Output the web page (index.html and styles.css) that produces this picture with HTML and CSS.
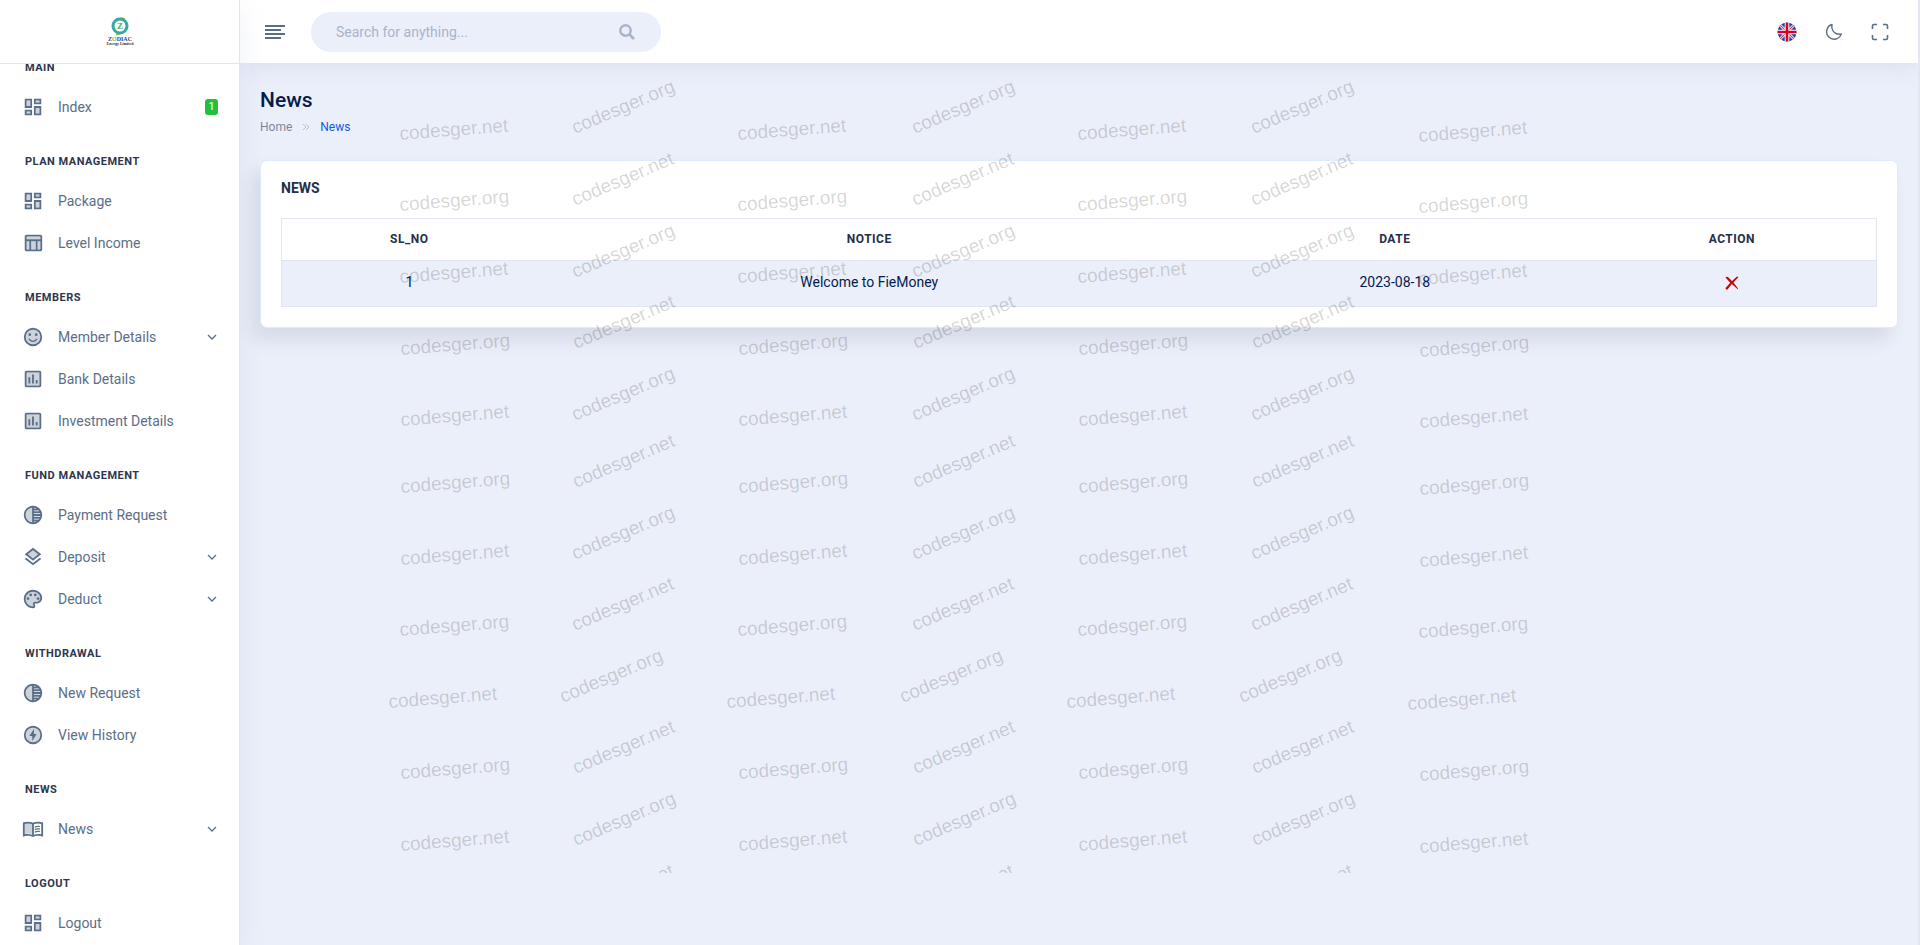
FILE: index.html
```
<!DOCTYPE html>
<html lang="en">
<head>
<meta charset="utf-8">
<title>News</title>
<link rel="stylesheet" href="styles.css">
</head>
<body>
<svg class="sprite" aria-hidden="true">
  <symbol id="i-dashboard" viewBox="0 0 24 24"><path opacity=".3" d="M5 5h4v6H5zm10 8h4v6h-4zM5 17h4v2H5zM15 5h4v2h-4z"/><path d="M3 13h8V3H3v10zm2-8h4v6H5V5zm8 16h8V11h-8v10zm2-8h4v6h-4v-6zM13 3v6h8V3h-8zm6 4h-4V5h4v2zM3 21h8v-6H3v6zm2-4h4v2H5v-2z"/></symbol>
  <symbol id="i-table" viewBox="0 0 24 24"><path opacity=".3" d="M5 10h3v9H5zm5 0h5v9h-5zm7 0h3v9h-3zM5 5h15v3H5z"/><path d="M20 3H5c-1.100 0-2 .9-2 2v14c0 1.100.9 2 2 2h15c1.100 0 2-.9 2-2V5c0-1.100-.9-2-2-2zm0 2v3H5V5h15zm-5 14h-5v-9h5v9zM5 10h3v9H5v-9zm12 9v-9h3v9h-3z"/></symbol>
  <symbol id="i-smile" viewBox="0 0 24 24"><circle cx="12" cy="12" r="8" opacity=".3"/><circle cx="15.500" cy="9.500" r="1.500"/><circle cx="8.500" cy="9.500" r="1.500"/><path d="M12 16c-1.480 0-2.750-.81-3.450-2H6.880c.8 2.050 2.790 3.500 5.120 3.500s4.320-1.450 5.120-3.500h-1.670c-.69 1.190-1.970 2-3.450 2z"/><path fill-rule="evenodd" d="M12 2a10 10 0 1 0 0 20 10 10 0 0 0 0-20zm0 2a8 8 0 1 1 0 16 8 8 0 0 1 0-16z"/></symbol>
  <symbol id="i-chart" viewBox="0 0 24 24"><path opacity=".3" d="M5 5h14v14H5z"/><path d="M19 3H5c-1.100 0-2 .9-2 2v14c0 1.100.9 2 2 2h14c1.100 0 2-.9 2-2V5c0-1.100-.9-2-2-2zm0 16H5V5h14v14zM7 10h2v7H7zm4-3h2v10h-2zm4 6h2v4h-2z"/></symbol>
  <symbol id="i-tone" viewBox="0 0 24 24"><path opacity=".3" d="M4 12a8 8 0 0 0 7 7.930V4.070A8 8 0 0 0 4 12z"/><path d="M12 2C6.480 2 2 6.480 2 12s4.480 10 10 10 10-4.480 10-10S17.520 2 12 2zm-1 17.930C7.060 19.440 4 16.080 4 12s3.050-7.440 7-7.930v15.860zm2-15.860c1.030.13 2 .45 2.870.93H13v-.93zM13 7h5.240c.25.31.48.65.68 1H13V7zm0 3h6.740c.08.33.15.66.19 1H13v-1zm0 9.930V19h2.870c-.87.48-1.840.8-2.870.93zM18.240 17H13v-1h5.920c-.2.35-.43.69-.68 1zm1.500-3H13v-1h6.930c-.04.34-.11.67-.19 1z"/></symbol>
  <symbol id="i-layers" viewBox="0 0 24 24"><path opacity=".3" d="M12 4.500 5.700 9l6.300 5 6.300-5z"/><path d="m12 18.500-7.400-5.700L3 14.100l9 7 9-7-1.600-1.300L12 18.500zM12 16l9-7-9-7-9 7 9 7zm0-11.500L17.700 9 12 13.500 6.300 9 12 4.500z"/></symbol>
  <symbol id="i-palette" viewBox="0 0 24 24"><path opacity=".3" d="M12 4a8 8 0 0 0 0 16c.3 0 .5-.2.5-.5 0-.6-.7-.9-.7-2 0-1.400 1.100-2.500 2.500-2.500H16a4 4 0 0 0 4-4c0-3.900-3.600-7-8-7z"/><path d="M12 22C6.490 22 2 17.510 2 12S6.490 2 12 2s10 4.040 10 9c0 3.310-2.690 6-6 6h-1.770c-.28 0-.5.22-.5.5 0 .12.050.23.130.33.41.47.64 1.060.64 1.670A2.500 2.500 0 0 1 12 22zm0-18c-4.410 0-8 3.590-8 8s3.590 8 8 8c.28 0 .5-.22.5-.5a.54.54 0 0 0-.14-.35c-.41-.46-.63-1.050-.63-1.650a2.500 2.500 0 0 1 2.500-2.500H16c2.210 0 4-1.790 4-4 0-3.860-3.590-7-8-7z"/><circle cx="6.500" cy="11.500" r="1.500"/><circle cx="9.500" cy="7.500" r="1.500"/><circle cx="14.500" cy="7.500" r="1.500"/><circle cx="17.500" cy="11.500" r="1.500"/></symbol>
  <symbol id="i-bolt" viewBox="0 0 24 24"><circle cx="12" cy="12" r="8" opacity=".3"/><path fill-rule="evenodd" d="M12 2a10 10 0 1 0 0 20 10 10 0 0 0 0-20zm0 2a8 8 0 1 1 0 16 8 8 0 0 1 0-16z"/><path d="M13 5.500 8 13h3.200v5.500L16 11h-3z"/></symbol>
  <symbol id="i-book" viewBox="0 0 24 24"><path opacity=".3" d="M3 6.500c2.500-.9 5.500-.9 8 0v11.200c-2.500-.9-5.500-.9-8 0z"/><path fill-rule="evenodd" d="M12 5.200C9 3.600 4.500 3.600 1 5v15.500c3.500-1.500 8-1.300 11 .3 3-1.600 7.500-1.800 11-.3V5c-3.500-1.400-8-1.400-11 .2zM3 6.500c2.500-.8 5.500-.8 8 .3v11.400c-2.500-.9-5.500-1-8-.4zm18 11.300c-2.500-.6-5.500-.5-8 .4V6.800c2.500-1.100 5.500-1.100 8-.3z"/><path d="M14 9.100c1.700-.7 3.700-.8 5.500-.5V10c-1.800-.3-3.800-.2-5.500.6zm0 2.700c1.700-.7 3.700-.8 5.500-.5v1.500c-1.800-.3-3.800-.2-5.500.5zm0 2.700c1.700-.7 3.700-.8 5.500-.5v1.500c-1.800-.3-3.800-.2-5.500.5z"/></symbol>
  <symbol id="i-down" viewBox="0 0 12 12"><path d="M2 4l4 4 4-4" fill="none" stroke="currentColor" stroke-width="1.300"/></symbol>
</svg>

<div class="shell">
  <aside class="sidebar">
    <a class="brand" href="#" aria-label="Zodiac Energy Limited">
      <svg class="brand-logo" viewBox="0 0 26 30">
        <circle cx="13" cy="9" r="7" fill="none" stroke="#35a9a4" stroke-width="3"/>
        <path d="M13 .5l5 .5-2 2zM10 15l3 2.500-4 .5z" fill="#5fae3c"/>
        <text x="13" y="12" text-anchor="middle" class="logo-z">Z</text>
        <text x="13" y="24" text-anchor="middle" class="logo-name">Z<tspan class="logo-o">O</tspan>DIAC</text>
        <text x="13" y="28" text-anchor="middle" class="logo-sub">Energy Limited</text>
      </svg>
    </a>
    <nav class="menu">
      <h3 class="menu-title">MAIN</h3>
      <a class="menu-item" href="#"><svg class="icon"><use href="#i-dashboard"/></svg><span>Index</span><span class="badge">1</span></a>
      <h3 class="menu-title">PLAN MANAGEMENT</h3>
      <a class="menu-item" href="#"><svg class="icon"><use href="#i-dashboard"/></svg><span>Package</span></a>
      <a class="menu-item" href="#"><svg class="icon"><use href="#i-table"/></svg><span>Level Income</span></a>
      <h3 class="menu-title">MEMBERS</h3>
      <a class="menu-item" href="#"><svg class="icon"><use href="#i-smile"/></svg><span>Member Details</span><svg class="chevron"><use href="#i-down"/></svg></a>
      <a class="menu-item" href="#"><svg class="icon"><use href="#i-chart"/></svg><span>Bank Details</span></a>
      <a class="menu-item" href="#"><svg class="icon"><use href="#i-chart"/></svg><span>Investment Details</span></a>
      <h3 class="menu-title">FUND MANAGEMENT</h3>
      <a class="menu-item" href="#"><svg class="icon"><use href="#i-tone"/></svg><span>Payment Request</span></a>
      <a class="menu-item" href="#"><svg class="icon"><use href="#i-layers"/></svg><span>Deposit</span><svg class="chevron"><use href="#i-down"/></svg></a>
      <a class="menu-item" href="#"><svg class="icon"><use href="#i-palette"/></svg><span>Deduct</span><svg class="chevron"><use href="#i-down"/></svg></a>
      <h3 class="menu-title">WITHDRAWAL</h3>
      <a class="menu-item" href="#"><svg class="icon"><use href="#i-tone"/></svg><span>New Request</span></a>
      <a class="menu-item" href="#"><svg class="icon"><use href="#i-bolt"/></svg><span>View History</span></a>
      <h3 class="menu-title">NEWS</h3>
      <a class="menu-item" href="#"><svg class="icon"><use href="#i-book"/></svg><span>News</span><svg class="chevron"><use href="#i-down"/></svg></a>
      <h3 class="menu-title">LOGOUT</h3>
      <a class="menu-item" href="#"><svg class="icon"><use href="#i-dashboard"/></svg><span>Logout</span></a>
    </nav>
  </aside>

  <div class="page">
    <header class="topbar">
      <button class="icon-button" type="button" aria-label="Toggle menu">
        <svg width="20" height="14" viewBox="0 0 20 14"><path d="M0 1h20M0 5h16M0 9h20M0 13h16" stroke="currentColor" stroke-width="2"/></svg>
      </button>
      <form class="search">
        <input class="search-input" type="search" placeholder="Search for anything..." aria-label="Search">
        <button class="search-button" type="submit" aria-label="Search">
          <svg width="16" height="16" viewBox="0 0 16 16"><circle cx="6.500" cy="6.500" r="5.200" fill="none" stroke="currentColor" stroke-width="2.500"/><path d="M10.500 10.500l4.500 4.500" stroke="currentColor" stroke-width="2.800"/></svg>
        </button>
      </form>
      <div class="tools">
        <button class="icon-button" type="button" aria-label="Language">
          <svg width="20" height="20" viewBox="0 0 20 20"><defs><clipPath id="disc"><circle cx="10" cy="10" r="9.500"/></clipPath></defs><g clip-path="url(#disc)"><path fill="#0f4aa8" d="M0 0h20v20H0z"/><path d="M2 2l16 16M18 2L2 18" stroke="#fff" stroke-width="2.800"/><path d="M2 2l16 16M18 2L2 18" stroke="#e0405c" stroke-width="1.200"/><path d="M10 0v20M0 10h20" stroke="#fff" stroke-width="4.600"/><path d="M10 0v20M0 10h20" stroke="#d80027" stroke-width="2.600"/></g></svg>
        </button>
        <button class="icon-button" type="button" aria-label="Dark mode">
          <svg width="18" height="18" viewBox="0 0 18 18"><path d="M7 1.500A7.500 7.500 0 1 0 16.300 10.900C11 12.500 5.800 8 7 1.500z" fill="none" stroke="currentColor" stroke-width="1.400" stroke-linejoin="round"/></svg>
        </button>
        <button class="icon-button" type="button" aria-label="Full screen">
          <svg width="18" height="18" viewBox="0 0 18 18"><path d="M1.500 6V3a1.500 1.500 0 0 1 1.500-1.500h3M12 1.500h3A1.500 1.500 0 0 1 16.500 3v3M16.500 12v3a1.500 1.500 0 0 1-1.500 1.500h-3M6 16.500H3A1.500 1.500 0 0 1 1.500 15v-3" fill="none" stroke="currentColor" stroke-width="1.600"/></svg>
        </button>
      </div>
    </header>

    <main class="content">
      <h1 class="page-title">News</h1>
      <nav class="crumbs" aria-label="Breadcrumb">
        <a href="#">Home</a>
        <svg width="8" height="8" viewBox="0 0 8 8"><path d="M1 1l3 3-3 3M4 1l3 3-3 3" fill="none" stroke="currentColor" stroke-width="1"/></svg>
        <a class="current" href="#">News</a>
      </nav>
      <section class="card">
        <h2 class="card-title">NEWS</h2>
        <table class="table">
          <colgroup><col class="col-no"><col class="col-notice"><col class="col-date"><col></colgroup>
          <thead><tr><th>SL_NO</th><th>NOTICE</th><th>DATE</th><th>ACTION</th></tr></thead>
          <tbody><tr><td>1</td><td>Welcome to FieMoney</td><td>2023-08-18</td><td><a class="remove" href="#" aria-label="Delete"><svg width="14" height="14" viewBox="0 0 14 14"><path d="M.5 1.500C1.500.3 2.500.5 3.500 1.500L7 5l5-4.500 1.500.5-5 5.500L13 12.500v1L6.800 8 2.500 13.500C1.500 13.800.3 13 .6 12L5.200 6.800z" fill="#c50808"/></svg></a></td></tr></tbody>
        </table>
      </section>
    </main>
  </div>
  <div class="scroll-edge"></div>
  <svg class="watermark" aria-hidden="true"></svg>
</div>
<script src="watermark.js"></script>
</body>
</html>
```

FILE: styles.css
```
* { box-sizing: border-box; }

body {
  margin: 0;
  font-family: Roboto, "Liberation Sans", sans-serif;
  font-size: 14px;
  line-height: 20px;
  color: #031b4e;
  background: #ebeffa;
}

a { color: inherit; text-decoration: none; }
button { border: 0; padding: 0; background: none; color: inherit; }
svg { display: block; }
.sprite { position: absolute; width: 0; height: 0; }

.shell {
  position: relative;
  display: flex;
  min-height: 100vh;
  overflow: hidden;
}

.sidebar {
  position: relative;
  z-index: 2;
  flex: 0 0 240px;
  background: #fff;
  border-right: 1px solid #e3e6f0;
  box-shadow: 0 8px 24px rgba(168, 180, 208, .2);
}

.brand {
  position: relative;
  z-index: 1;
  display: flex;
  align-items: center;
  justify-content: center;
  height: 64px;
  background: #fff;
  border-bottom: 1px solid #e3e6f0;
}
.brand-logo { width: 26px; height: 30px; overflow: visible; }
.logo-z { font: bold 9px "Liberation Serif", serif; fill: #4caf50; }
.logo-name { font: bold 6px "Liberation Serif", serif; fill: #2b3a8c; }
.logo-o { fill: #6cc04a; }
.logo-sub { font: bold 4px "Liberation Serif", serif; fill: #333; }

.menu { margin-top: -30px; }
.menu-title {
  margin: 0;
  padding: 25px 25px 9px;
  font-size: 11px;
  line-height: 18px;
  font-weight: 700;
  letter-spacing: .5px;
  color: #2c364c;
}
.menu-item {
  display: flex;
  align-items: center;
  gap: 14px;
  height: 42px;
  padding: 0 21px 0 22px;
  color: #5b6e88;
}
.icon { width: 22px; height: 22px; fill: currentColor; }
.chevron { width: 12px; height: 12px; margin-left: auto; }
.badge {
  min-width: 13px;
  margin-left: auto;
  padding: 0 3px;
  border-radius: 3px;
  background: #22c03c;
  color: #fff;
  font-size: 11px;
  line-height: 16px;
  text-align: center;
}

.page { flex: 1; min-width: 0; }

.topbar {
  display: flex;
  align-items: center;
  height: 63px;
  padding: 0 29px 0 25px;
  background: #fff;
  box-shadow: 0 4px 20px rgba(168, 180, 208, .25);
  color: #5b6e88;
}
.search {
  display: flex;
  align-items: center;
  width: 350px;
  height: 40px;
  margin-left: 26px;
  padding: 0 26px 0 25px;
  border-radius: 20px;
  background: #ebeffa;
}
.search-input {
  flex: 1;
  min-width: 0;
  padding: 0;
  border: 0;
  outline: 0;
  background: none;
  font: inherit;
}
.search-input::placeholder { color: #a9b4cb; opacity: 1; }
.search-button { color: #a9b4cb; }
.tools { display: flex; align-items: center; gap: 28px; margin-left: auto; }

.content { padding: 25px 20px; }
.page-title { margin: 0; font-size: 21px; line-height: 25px; font-weight: 500; }
.crumbs {
  display: flex;
  align-items: center;
  gap: 10px;
  margin-top: 4px;
  font-size: 12px;
  color: #7987a1;
}
.crumbs svg { color: #b8c1d3; }
.crumbs .current { color: #0d5bf0; }

.card {
  margin-top: 23px;
  padding: 17px 20px 20px;
  border: 1px solid #deebfd;
  border-radius: 7px;
  background: #fff;
  box-shadow: -8px 12px 18px rgba(25, 42, 70, .1);
}
.card-title { margin: 0 0 20px; font-size: 14px; font-weight: 700; color: #242f48; }

.table {
  width: 100%;
  table-layout: fixed;
  border-collapse: collapse;
  border: 1px solid #e3e6f0;
  text-align: center;
}
.col-no { width: 16%; }
.col-notice { width: 41.700%; }
.col-date { width: 24.200%; }
.table th {
  height: 42px;
  padding: 0 0 2px;
  font-size: 12px;
  font-weight: 700;
  letter-spacing: .5px;
  color: #242f48;
  border-bottom: 1px solid #e3e6f0;
}
.table td { height: 46px; padding: 0 0 3px; background: #ebeffa; }
.remove { display: inline-block; vertical-align: middle; }

.scroll-edge { position: relative; z-index: 3; flex: 0 0 2px; background: #e2e6f2; }

.watermark {
  position: absolute;
  z-index: 4;
  top: 0;
  left: 0;
  width: 100%;
  height: 873px;
  overflow: hidden;
  pointer-events: none;
  font-family: "Liberation Sans", Arial, sans-serif;
  font-size: 19px;
  fill: rgba(0, 0, 0, .17);
}
```

FILE: watermark.js
```
const layer = document.querySelector(".watermark");
const names = ["codesger.net", "codesger.org"];

// Each band repeats one column of tilted labels across the page.
const bands = [
  {
    angle: -4.5,
    first: 0,
    columns: [[0, 0], [338, 0], [678, 0], [1019, 2]],
    rows: [[400, 140], [400, 211], [400, 283], [401, 355], [401, 426], [401, 493], [401, 565], [400, 636], [389, 708], [401, 779], [401, 851]]
  },
  {
    angle: -23,
    first: 1,
    columns: [[0, 0], [340, 0], [679, 0]],
    rows: [[575, 134], [575, 206], [575, 278], [576, 349], [575, 421], [576, 488], [575, 560], [575, 631], [563, 703], [576, 774], [576, 846], [575, 918]]
  }
];

for (const band of bands) {
  for (const [dx, dy] of band.columns) {
    band.rows.forEach(([x, y], i) => {
      const label = document.createElementNS("http://www.w3.org/2000/svg", "text");
      label.setAttribute("transform", `translate(${x + dx} ${y + dy}) rotate(${band.angle})`);
      label.textContent = names[(i + band.first) % 2];
      layer.append(label);
    });
  }
}
```
